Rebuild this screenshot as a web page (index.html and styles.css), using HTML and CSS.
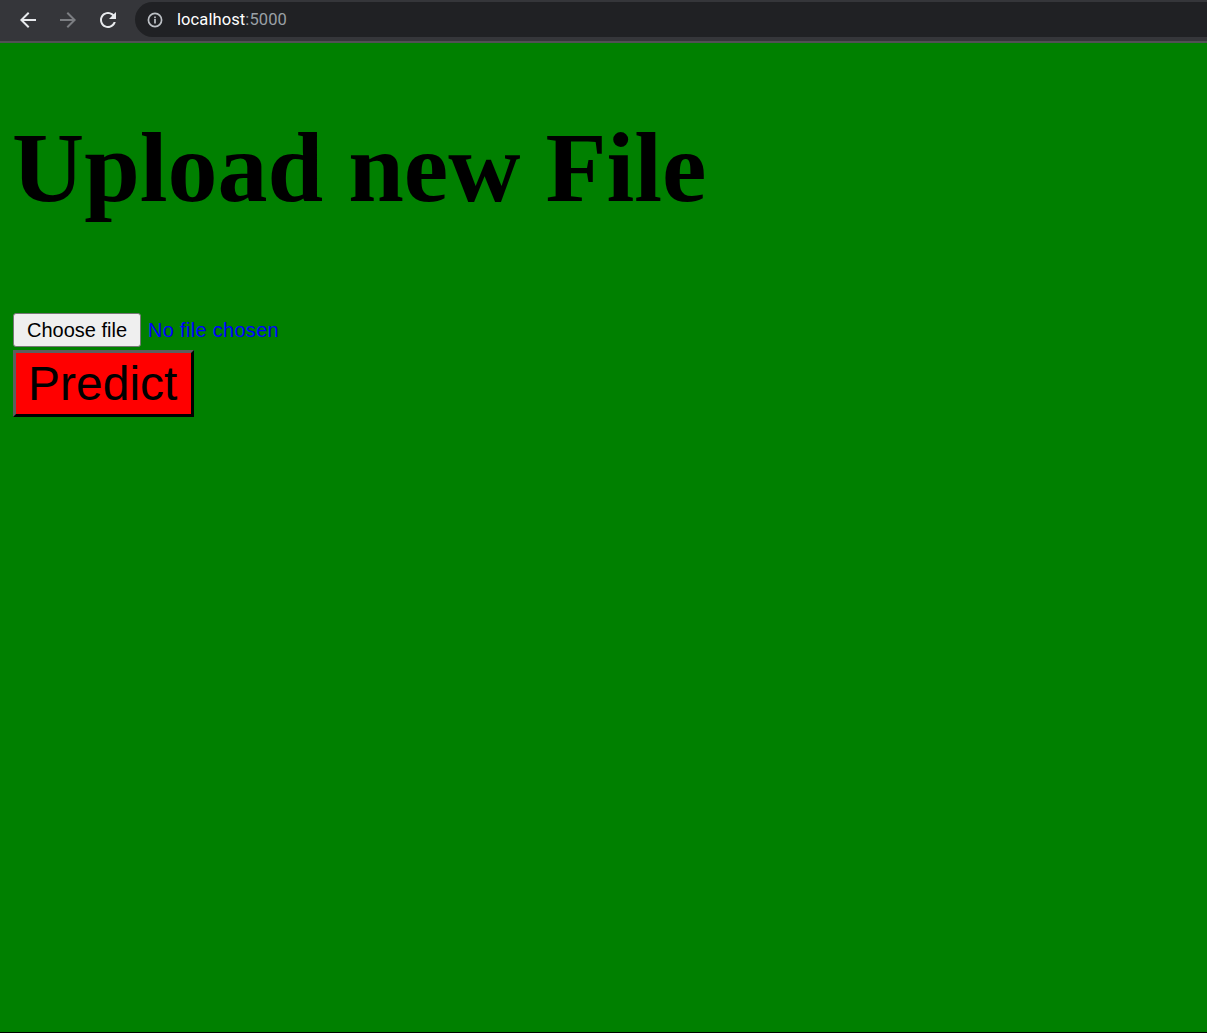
FILE: index.html
```html
<!DOCTYPE html>
<html lang="en">
<head>
<meta charset="utf-8">
<title>Upload new File</title>
<link rel="stylesheet" href="styles.css">
</head>
<body>
<div class="window">
  <header class="toolbar">
    <nav class="nav">
      <span class="nav-btn">
        <svg class="icon" viewBox="0 0 24 24" width="24" height="24"><path fill="#e8eaed" d="M20 11H7.83l5.59-5.59L12 4l-8 8 8 8 1.41-1.41L7.83 13H20v-2z"/></svg>
      </span>
      <span class="nav-btn">
        <svg class="icon" viewBox="0 0 24 24" width="24" height="24"><path fill="#7c7e82" d="M4 11h12.17l-5.59-5.59L12 4l8 8-8 8-1.41-1.41L16.17 13H4v-2z"/></svg>
      </span>
      <span class="nav-btn">
        <svg class="icon" viewBox="0 0 24 24" width="24" height="24"><path fill="#e8eaed" d="M17.65 6.35C16.2 4.9 14.21 4 12 4c-4.42 0-7.990 3.58-7.99 8s3.57 8 7.99 8c3.73 0 6.84-2.55 7.73-6h-2.08c-.82 2.33-3.04 4-5.650 4-3.31 0-6-2.69-6-6s2.69-6 6-6c1.66 0 3.14.69 4.22 1.78L13 11h7V4l-2.35 2.35z"/></svg>
      </span>
    </nav>
    <div class="omnibox">
      <svg class="info" viewBox="0 0 16 16" width="16" height="16"><circle cx="8" cy="8" r="6.6" fill="none" stroke="#bdc1c6" stroke-width="1.7"/><rect x="7.15" y="7" width="1.7" height="4.5" fill="#bdc1c6"/><rect x="7.15" y="4.5" width="1.7" height="1.7" fill="#bdc1c6"/></svg>
      <span class="url"><span class="host">localhost</span><span class="port">:5000</span></span>
    </div>
  </header>
  <main class="page">
    <h1 class="title">Upload new File</h1>
    <form class="upload">
      <div class="file-row">
        <button type="button" class="file-btn">Choose file</button>
        <span class="file-status">No file chosen</span>
      </div>
      <button type="button" class="predict">Predict</button>
    </form>
  </main>
</div>
</body>
</html>
```
FILE: styles.css
```css
html, body {
  margin: 0;
  padding: 0;
}

body {
  background: #000;
}

.window {
  display: flex;
  flex-direction: column;
  height: 1033px;
}

.toolbar {
  display: flex;
  align-items: flex-start;
  box-sizing: content-box;
  height: 39px;
  padding-top: 2px;
  background: #35363a;
  border-bottom: 2px solid #505154;
}

.nav {
  display: flex;
  padding-left: 8px;
}

.nav-btn {
  display: flex;
  align-items: center;
  justify-content: center;
  width: 40px;
  height: 35px;
}

.icon {
  display: block;
}

.omnibox {
  flex: 1;
  display: flex;
  align-items: center;
  gap: 14px;
  margin-left: 7px;
  height: 35px;
  padding-left: 12px;
  background: #202124;
  border-radius: 18px 0 0 18px;
}

.info {
  display: block;
}

.url {
  font-family: Roboto, "Noto Sans", sans-serif;
  font-size: 16.5px;
  letter-spacing: 0.1px;
}

.host {
  color: #ffffff;
}

.port {
  color: #9aa0a6;
}

.page {
  flex: 1;
  background: #008000;
  border-bottom: 1px solid #000;
  padding-left: 10px;
}

.title {
  margin: 67px 0 0 2px;
  font-family: "Liberation Serif", "Times New Roman", serif;
  font-size: 100px;
  font-weight: bold;
  color: #000;
}

.upload {
  margin: 88px 0 0 3px;
}

.file-row {
  display: flex;
  align-items: baseline;
  gap: 7px;
}

.file-btn {
  font-family: "Liberation Sans", Arial, sans-serif;
  font-size: 20px;
  line-height: 24px;
  padding: 4px 13px;
  color: #000;
  background: #efefef;
  border: 1px solid #767676;
  border-radius: 3px;
}

.file-status {
  font-family: "Liberation Sans", Arial, sans-serif;
  font-size: 20px;
  letter-spacing: 0.3px;
  color: #0000ff;
}

.predict {
  display: block;
  margin-top: 3px;
  font-family: "Liberation Sans", Arial, sans-serif;
  font-size: 48px;
  line-height: normal;
  padding: 3px 14px 3px 12px;
  color: #000;
  background: #ff0000;
  border-style: solid;
  border-width: 3px;
  border-color: #5e5e5e #000 #000 #5e5e5e;
  border-radius: 0;
}
```
